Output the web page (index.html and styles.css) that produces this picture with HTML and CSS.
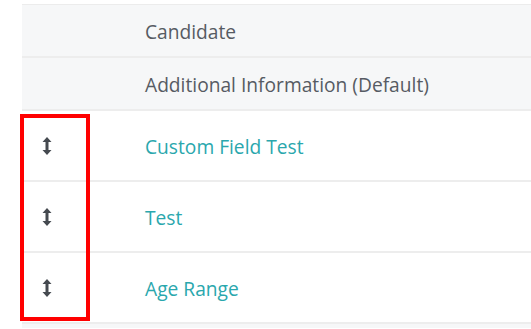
FILE: index.html
```html
<!DOCTYPE html>
<html>
<head>
<meta charset="utf-8">
<link rel="stylesheet" href="styles.css">
</head>
<body>
<div class="table">
  <div class="row head"><div class="handle"></div><div class="label">Candidate</div></div>
  <div class="row head"><div class="handle"></div><div class="label">Additional Information (Default)</div></div>
  <div class="group">
    <div class="row item"><div class="handle"><svg class="icon" width="10" height="20" viewBox="0 0 10 20"><path d="M5 1 L9.5 6 H6.5 V14 H9.5 L5 19 L0.5 14 H3.5 V6 H0.5 Z" fill="#454a50"/></svg></div><div class="label link">Custom Field Test</div></div>
    <div class="row item"><div class="handle"><svg class="icon" width="10" height="20" viewBox="0 0 10 20"><path d="M5 1 L9.5 6 H6.5 V14 H9.5 L5 19 L0.5 14 H3.5 V6 H0.5 Z" fill="#454a50"/></svg></div><div class="label link">Test</div></div>
    <div class="row item"><div class="handle"><svg class="icon" width="10" height="20" viewBox="0 0 10 20"><path d="M5 1 L9.5 6 H6.5 V14 H9.5 L5 19 L0.5 14 H3.5 V6 H0.5 Z" fill="#454a50"/></svg></div><div class="label link">Age Range</div></div>
    <div class="highlight"></div>
  </div>
  <div class="row foot"></div>
</div>
</body>
</html>
```
FILE: styles.css
```css
html, body {
  margin: 0;
  padding: 0;
  background: #ffffff;
  font-family: "Open Sans", "Liberation Sans", sans-serif;
  overflow: hidden;
}
.table {
  margin: 4px 0 0 22px;
  width: 509px;
  border-top: 1px solid #ececec;
}
.row {
  display: flex;
  align-items: center;
  border-bottom: 2px solid #ededed;
}
.head {
  background: #f6f7f8;
  height: 51px;
}
.item {
  height: 69px;
  background: #ffffff;
}
.foot {
  height: 4px;
  background: #f6f7f8;
  border-bottom: none;
}
.handle {
  width: 123px;
  flex: none;
  display: flex;
  align-items: center;
  padding-left: 20px;
  box-sizing: border-box;
}
.icon {
  display: block;
}
.label {
  font-size: 19.2px;
  color: #565b63;
  padding-top: 1px;
}
.link {
  color: #2aa7ad;
}
.group {
  position: relative;
}
.highlight {
  position: absolute;
  left: -2px;
  top: 3px;
  width: 70px;
  height: 207px;
  border: 4px solid #ff0000;
  box-sizing: border-box;
}
```
